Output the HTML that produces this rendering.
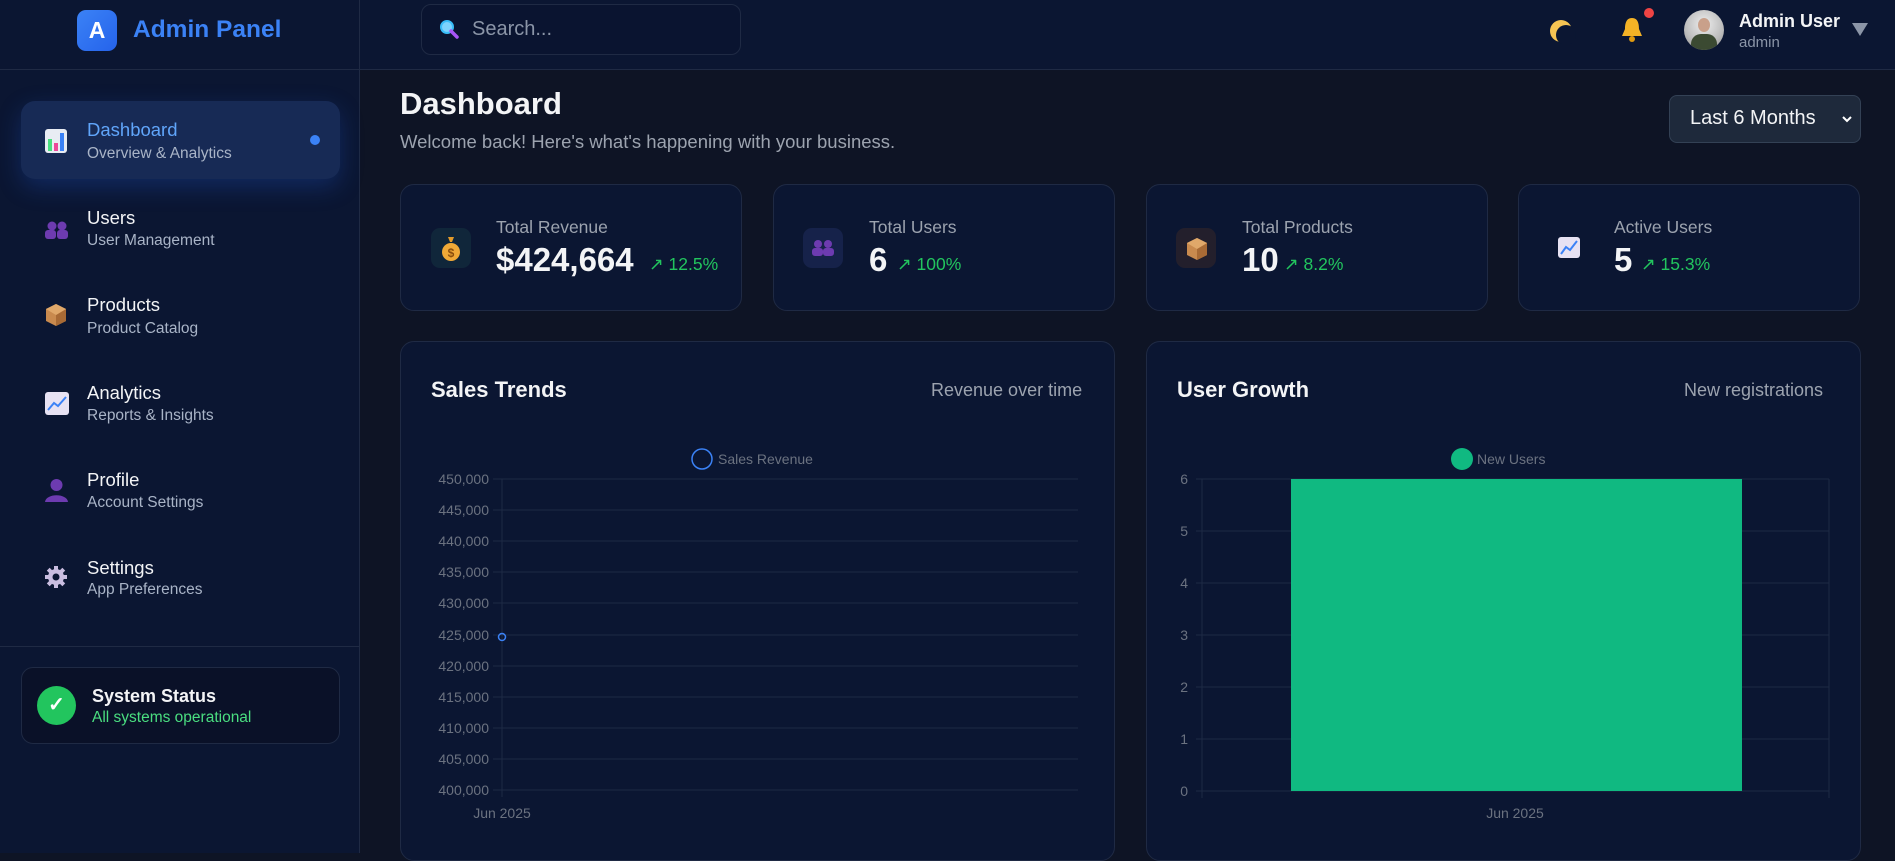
<!DOCTYPE html>
<html><head><meta charset="utf-8"><style>
*{margin:0;padding:0;box-sizing:border-box}
body{width:1895px;height:853px;overflow:hidden;background:#0e1425;font-family:"Liberation Sans",sans-serif;position:relative;color:#e5e7eb}
.abs{position:absolute}
.hdr{left:0;top:0;width:1895px;height:70px;background:#0b1632;border-bottom:1px solid #1f2a44}
.side{left:0;top:70px;width:360px;height:783px;background:#0b1632;border-right:1px solid #1f2a44}
.sideh{left:0;top:0;width:360px;height:70px;border-right:1px solid #1f2a44}
.t{position:absolute;white-space:nowrap}
.card{position:absolute;background:#0b1632;border:1px solid #1f2a44;border-radius:14px}
.ic{position:absolute;width:40px;height:40px;border-radius:9px}
.lbl{font-size:17.5px;color:#9ca3af}
.val{font-size:33px;font-weight:bold;color:#f3f4f6}
.chg{font-size:17.5px;color:#22c55e}
</style></head><body>
<div class="abs hdr"></div>
<div class="abs side"></div>
<div class="abs sideh"></div>
<div class="abs" style="left:77px;top:10px;width:40px;height:41px;border-radius:9px;background:linear-gradient(135deg,#3b82f6,#2563eb);color:#fff;font-weight:bold;font-size:23px;text-align:center;line-height:41px">A</div>
<div class="t" style="left:133px;top:16px;font-size:24.5px;font-weight:bold;color:#3b82f6">Admin Panel</div>
<div class="abs" style="left:421px;top:4px;width:320px;height:51px;border:1px solid #1f2a44;border-radius:10px;background:#0a1430"></div>
<svg class="abs" style="left:439px;top:19px" width="20" height="20"><circle cx="8" cy="8" r="6" fill="#7dd3fc" stroke="#38bdf8" stroke-width="2"/><line x1="12" y1="12" x2="18" y2="18" stroke="#a855f7" stroke-width="3.5" stroke-linecap="round"/></svg>
<div class="t" style="left:472px;top:18px;font-size:20px;color:#8b95a7">Search...</div>
<svg class="abs" style="left:1548px;top:16px" width="28" height="28"><circle cx="13" cy="15" r="11" fill="#f6c453"/><circle cx="18" cy="19" r="10" fill="#0b1632"/></svg>
<svg class="abs" style="left:1619px;top:16px" width="26" height="28"><path d="M13 2 C7 2 6 8 6 13 L3 20 H23 L20 13 C20 8 19 2 13 2Z" fill="#f5b326"/><circle cx="13" cy="23" r="3" fill="#e09a10"/></svg>
<div class="abs" style="left:1644px;top:8px;width:10px;height:10px;border-radius:50%;background:#ef4444"></div>
<div class="abs" style="left:1684px;top:10px;width:40px;height:40px;border-radius:50%;background:radial-gradient(circle at 50% 35%,#eee 0,#bbb 60%,#888 100%);overflow:hidden"><div class="abs" style="left:14px;top:8px;width:12px;height:14px;border-radius:50%;background:#c9a08a"></div><div class="abs" style="left:7px;top:24px;width:26px;height:20px;border-radius:10px 10px 0 0;background:#3b4a32"></div></div>
<div class="t" style="left:1739px;top:11px;font-size:18px;font-weight:bold;color:#f3f4f6">Admin User</div>
<div class="t" style="left:1739px;top:34px;font-size:15px;color:#8b95a7">admin</div>
<svg class="abs" style="left:1852px;top:23px" width="16" height="13"><path d="M0 0 H16 L8 13Z" fill="#8b95a7"/></svg>

<div class="abs" style="left:21px;top:101px;width:319px;height:78px;border-radius:14px;background:#172a55;box-shadow:0 8px 24px rgba(37,99,235,.25)"></div>
<svg class="abs" style="left:45px;top:129px" width="22" height="24"><rect x="0" y="0" width="22" height="24" rx="3" fill="#e8ecf3"/><rect x="3" y="10" width="4" height="12" fill="#4ade80"/><rect x="9" y="14" width="4" height="8" fill="#ec4899"/><rect x="15" y="4" width="4" height="18" fill="#3b82f6"/></svg>
<div class="t" style="left:87px;top:119px;font-size:18.5px;color:#60a5fa">Dashboard</div>
<div class="t" style="left:87px;top:145px;font-size:15.5px;color:#a9b4c7">Overview &amp; Analytics</div>
<div class="abs" style="left:310px;top:135px;width:10px;height:10px;border-radius:50%;background:#3b82f6"></div>

<svg class="abs" style="left:45px;top:221px" width="24" height="18"><circle cx="7" cy="5" r="4.5" fill="#6d3bb0"/><circle cx="17" cy="5" r="4.5" fill="#6d3bb0"/><rect x="0" y="9" width="11" height="9" rx="3" fill="#6d3bb0"/><rect x="12" y="9" width="11" height="9" rx="3" fill="#6d3bb0"/></svg>
<div class="t" style="left:87px;top:207px;font-size:18.5px;color:#f3f4f6">Users</div>
<div class="t" style="left:87px;top:232px;font-size:15.5px;color:#a9b4c7">User Management</div>

<svg class="abs" style="left:45px;top:303px" width="22" height="24"><path d="M11 1 L21 6 V18 L11 23 L1 18 V6Z" fill="#c98a4e"/><path d="M11 12 L21 6 V18 L11 23Z" fill="#a86a35"/><path d="M1 6 L11 1 L21 6 L11 12Z" fill="#e0a86a"/></svg>
<div class="t" style="left:87px;top:294px;font-size:18.5px;color:#f3f4f6">Products</div>
<div class="t" style="left:87px;top:320px;font-size:15.5px;color:#a9b4c7">Product Catalog</div>

<svg class="abs" style="left:45px;top:392px" width="24" height="23"><rect width="24" height="23" rx="3" fill="#e7e2f3"/><path d="M3 18 L9 11 L13 14 L21 5" stroke="#3b82f6" stroke-width="2" fill="none"/></svg>
<div class="t" style="left:87px;top:382px;font-size:18.5px;color:#f3f4f6">Analytics</div>
<div class="t" style="left:87px;top:407px;font-size:15.5px;color:#a9b4c7">Reports &amp; Insights</div>

<svg class="abs" style="left:45px;top:478px" width="23" height="24"><circle cx="11.5" cy="7" r="6" fill="#6d3bb0"/><path d="M0 24 C1 15 22 15 23 24Z" fill="#6d3bb0"/></svg>
<div class="t" style="left:87px;top:469px;font-size:18.5px;color:#f3f4f6">Profile</div>
<div class="t" style="left:87px;top:494px;font-size:15.5px;color:#a9b4c7">Account Settings</div>

<svg class="abs" style="left:45px;top:566px" width="22" height="22"><g fill="#c9bde0"><circle cx="11" cy="11" r="8"/><rect x="9" y="0" width="4" height="22"/><rect x="0" y="9" width="22" height="4"/><rect x="9" y="0" width="4" height="22" transform="rotate(45 11 11)"/><rect x="9" y="0" width="4" height="22" transform="rotate(-45 11 11)"/></g><circle cx="11" cy="11" r="3.5" fill="#0b1632"/></svg>
<div class="t" style="left:87px;top:557px;font-size:18.5px;color:#f3f4f6">Settings</div>
<div class="t" style="left:87px;top:581px;font-size:15.5px;color:#a9b4c7">App Preferences</div>

<div class="abs" style="left:0;top:646px;width:360px;height:1px;background:#1f2a44"></div>
<div class="abs" style="left:21px;top:667px;width:319px;height:77px;border:1px solid #1f2a44;border-radius:12px;background:#0a1128"></div>
<div class="abs" style="left:37px;top:686px;width:39px;height:39px;border-radius:50%;background:#22c55e;color:#fff;text-align:center;line-height:39px;font-size:20px;font-weight:bold">✓</div>
<div class="t" style="left:92px;top:686px;font-size:18px;font-weight:bold;color:#f3f4f6">System Status</div>
<div class="t" style="left:92px;top:709px;font-size:15.5px;color:#4ade80">All systems operational</div>

<div class="t" style="left:400px;top:86px;font-size:31px;font-weight:bold;color:#f3f4f6">Dashboard</div>
<div class="t" style="left:400px;top:131px;font-size:18.5px;color:#9ca3af">Welcome back! Here's what's happening with your business.</div>
<div class="abs" style="left:1669px;top:95px;width:192px;height:48px;border:1px solid #334155;border-radius:8px;background:#1e293b"></div>
<div class="t" style="left:1690px;top:107px;font-size:20px;color:#f3f4f6">Last 6 Months</div>
<svg class="abs" style="left:1842px;top:116px" width="10" height="7"><path d="M1 1 L5 5 L9 1" stroke="#fff" stroke-width="2" fill="none"/></svg>

<div class="card" style="left:400px;top:184px;width:342px;height:127px"></div>
<div class="ic" style="left:431px;top:228px;background:#10263a"></div>
<svg class="abs" style="left:440px;top:234px" width="22" height="28"><path d="M8 3 H14 L12 8 H10Z" fill="#e29a2a"/><ellipse cx="11" cy="18" rx="9" ry="9" fill="#f0a937"/><text x="11" y="23" font-size="12" font-family="Liberation Sans" font-weight="bold" fill="#8a4d0c" text-anchor="middle">$</text></svg>
<div class="t lbl" style="left:496px;top:217px">Total Revenue</div>
<div class="t val" style="left:496px;top:241px">$424,664</div>
<div class="t chg" style="left:649px;top:254px">↗ 12.5%</div>

<div class="card" style="left:773px;top:184px;width:342px;height:127px"></div>
<div class="ic" style="left:803px;top:228px;background:#16224a"></div>
<svg class="abs" style="left:812px;top:240px" width="23" height="16"><circle cx="6" cy="4" r="4" fill="#6d3bb0"/><circle cx="16" cy="4" r="4" fill="#6d3bb0"/><rect x="0" y="8" width="11" height="8" rx="3" fill="#6d3bb0"/><rect x="11" y="8" width="11" height="8" rx="3" fill="#6d3bb0"/></svg>
<div class="t lbl" style="left:869px;top:217px">Total Users</div>
<div class="t val" style="left:869px;top:241px">6</div>
<div class="t chg" style="left:897px;top:254px">↗ 100%</div>

<div class="card" style="left:1146px;top:184px;width:342px;height:127px"></div>
<div class="ic" style="left:1176px;top:228px;background:#231f2c"></div>
<svg class="abs" style="left:1186px;top:237px" width="22" height="24"><path d="M11 1 L21 6 V18 L11 23 L1 18 V6Z" fill="#c98a4e"/><path d="M11 12 L21 6 V18 L11 23Z" fill="#a86a35"/><path d="M1 6 L11 1 L21 6 L11 12Z" fill="#e0a86a"/></svg>
<div class="t lbl" style="left:1242px;top:217px">Total Products</div>
<div class="t val" style="left:1242px;top:241px">10</div>
<div class="t chg" style="left:1284px;top:254px">↗ 8.2%</div>

<div class="card" style="left:1518px;top:184px;width:342px;height:127px"></div>
<svg class="abs" style="left:1558px;top:237px" width="22" height="21"><rect width="22" height="21" rx="3" fill="#e7e2f3"/><path d="M3 17 L8 10 L12 13 L19 4" stroke="#3b82f6" stroke-width="2" fill="none"/></svg>
<div class="t lbl" style="left:1614px;top:217px">Active Users</div>
<div class="t val" style="left:1614px;top:241px">5</div>
<div class="t chg" style="left:1641px;top:254px">↗ 15.3%</div>

<div class="card" style="left:400px;top:341px;width:715px;height:520px"></div>
<div class="t" style="left:431px;top:377px;font-size:22px;font-weight:bold;color:#f3f4f6">Sales Trends</div>
<div class="t" style="left:931px;top:380px;font-size:18px;color:#9ca3af">Revenue over time</div>
<svg class="abs" style="left:400px;top:440px" width="715" height="400" font-family="Liberation Sans" font-size="14">
<circle cx="302" cy="19" r="10" fill="none" stroke="#3b82f6" stroke-width="1.5"/>
<text x="318" y="24" fill="#6b7280">Sales Revenue</text>
<g stroke="#1e2a44" stroke-width="1">
<line x1="93" y1="39" x2="678" y2="39"/><line x1="93" y1="70" x2="678" y2="70"/><line x1="93" y1="101" x2="678" y2="101"/><line x1="93" y1="132" x2="678" y2="132"/><line x1="93" y1="163" x2="678" y2="163"/><line x1="93" y1="195" x2="678" y2="195"/><line x1="93" y1="226" x2="678" y2="226"/><line x1="93" y1="257" x2="678" y2="257"/><line x1="93" y1="288" x2="678" y2="288"/><line x1="93" y1="319" x2="678" y2="319"/><line x1="93" y1="350" x2="678" y2="350"/>
<line x1="102" y1="39" x2="102" y2="357"/>
</g>
<g fill="#6b7280" text-anchor="end">
<text x="89" y="44">450,000</text><text x="89" y="75">445,000</text><text x="89" y="106">440,000</text><text x="89" y="137">435,000</text><text x="89" y="168">430,000</text><text x="89" y="200">425,000</text><text x="89" y="231">420,000</text><text x="89" y="262">415,000</text><text x="89" y="293">410,000</text><text x="89" y="324">405,000</text><text x="89" y="355">400,000</text>
</g>
<text x="102" y="378" fill="#6b7280" text-anchor="middle">Jun 2025</text>
<circle cx="102" cy="197" r="3.5" fill="none" stroke="#3b82f6" stroke-width="1.5"/>
</svg>

<div class="card" style="left:1146px;top:341px;width:715px;height:520px"></div>
<div class="t" style="left:1177px;top:377px;font-size:22px;font-weight:bold;color:#f3f4f6">User Growth</div>
<div class="t" style="left:1684px;top:380px;font-size:18px;color:#9ca3af">New registrations</div>
<svg class="abs" style="left:1146px;top:440px" width="715" height="400" font-family="Liberation Sans" font-size="14">
<ellipse cx="316" cy="19" rx="11" ry="11" fill="#10b981"/>
<text x="331" y="24" fill="#6b7280">New Users</text>
<g stroke="#1e2a44" stroke-width="1">
<line x1="50" y1="39" x2="683" y2="39"/><line x1="50" y1="91" x2="683" y2="91"/><line x1="50" y1="143" x2="683" y2="143"/><line x1="50" y1="195" x2="683" y2="195"/><line x1="50" y1="247" x2="683" y2="247"/><line x1="50" y1="299" x2="683" y2="299"/><line x1="50" y1="351" x2="683" y2="351"/>
<line x1="56" y1="39" x2="56" y2="358"/><line x1="683" y1="39" x2="683" y2="358"/>
</g>
<g fill="#6b7280" text-anchor="end">
<text x="42" y="44">6</text><text x="42" y="96">5</text><text x="42" y="148">4</text><text x="42" y="200">3</text><text x="42" y="252">2</text><text x="42" y="304">1</text><text x="42" y="356">0</text>
</g>
<rect x="145" y="39" width="451" height="312" fill="#10b981"/>
<text x="369" y="378" fill="#6b7280" text-anchor="middle">Jun 2025</text>
</svg>
</body></html>
